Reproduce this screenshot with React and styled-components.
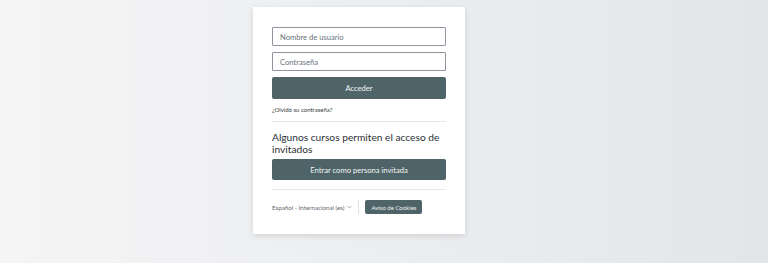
import styled, { createGlobalStyle } from "styled-components";

const GlobalStyle = createGlobalStyle`
  * { box-sizing: border-box; }
  html, body { margin: 0; padding: 0; }
  body {
    font-family: Lato, "Open Sans", sans-serif;
    color: #1d2125;
  }
`;

const Page = styled.div`
  width: 768px;
  height: 263px;
  background: linear-gradient(90deg, #f5f5f6 0%, #e3e6e9 100%);
  display: flex;
  justify-content: center;
  align-items: flex-start;
  padding-top: 7px;
  padding-right: 50px;
`;

const Card = styled.div`
  width: 212px;
  background: #fff;
  box-shadow: 0 2px 6px rgba(0, 0, 0, 0.12);
  padding: 20px 19px 20px;
  display: flex;
  flex-direction: column;
`;

const Input = styled.input`
  width: 100%;
  height: 19px;
  border: 1px solid #8f959e;
  border-radius: 1px;
  padding: 0 7px;
  font-family: inherit;
  font-size: 7.6px;
  color: #1d2125;
  margin-bottom: ${(p) => p.$gap || 0}px;
  outline: none;
  &::placeholder { color: #6a737b; }
`;

const PrimaryButton = styled.button`
  width: 100%;
  height: ${(p) => p.$h || 22}px;
  border: none;
  border-radius: 2px;
  background: #4f6468;
  color: #f3f5f5;
  font-family: inherit;
  font-size: 7.6px;
  cursor: pointer;
`;

const Forgot = styled.a`
  font-size: 6px;
  color: #343a40;
  margin-top: 7px;
  text-decoration: none;
`;

const Rule = styled.hr`
  border: none;
  border-top: 1px solid #e6e8ea;
  margin: ${(p) => p.$m || "10px 0"};
  width: 100%;
`;

const Heading = styled.h2`
  font-size: 10.2px;
  font-weight: 400;
  line-height: 11.5px;
  margin: 0 0 4px;
  color: #2b3035;
`;

const Footer = styled.div`
  display: flex;
  align-items: center;
  gap: 6px;
`;

const Lang = styled.div`
  font-size: 6.2px;
  color: #5f666d;
  display: flex;
  align-items: center;
  gap: 3px;
`;

const Divider = styled.div`
  width: 1px;
  height: 14px;
  background: #dfe2e5;
`;

const SmallButton = styled.button`
  height: 14px;
  border: none;
  border-radius: 2px;
  background: #4f6468;
  color: #f3f5f5;
  font-family: inherit;
  font-size: 6px;
  padding: 0 6px;
`;

export default function App() {
  return (
    <>
      <GlobalStyle />
      <Page>
        <Card>
          <Input placeholder="Nombre de usuario" $gap={6} />
          <Input type="password" placeholder="Contraseña" $gap={6} />
          <PrimaryButton>Acceder</PrimaryButton>
          <Forgot href="#">¿Olvidó su contraseña?</Forgot>
          <Rule $m="8px 0 10px" />
          <Heading>Algunos cursos permiten el acceso de invitados</Heading>
          <PrimaryButton $h={21}>Entrar como persona invitada</PrimaryButton>
          <Rule $m="9px 0 10px" />
          <Footer>
            <Lang>
              Español - Internacional (es)
              <svg width="5" height="4" viewBox="0 0 5 4">
                <path d="M0.5 1 L2.5 3 L4.5 1" fill="none" stroke="#8a9097" strokeWidth="0.7" />
              </svg>
            </Lang>
            <Divider />
            <SmallButton>Aviso de Cookies</SmallButton>
          </Footer>
        </Card>
      </Page>
    </>
  );
}
